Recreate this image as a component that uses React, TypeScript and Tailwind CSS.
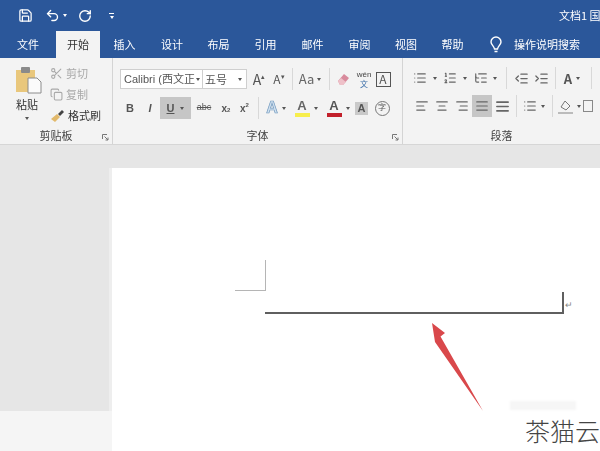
import React from "react";
import {
  AlignCenter,
  AlignJustify,
  AlignLeft,
  AlignRight,
  Copy,
  IndentDecrease,
  IndentIncrease,
  List,
  ListOrdered,
  ListTree,
  Save,
  Scissors,
  Undo2,
  RotateCw,
} from "lucide-react";

const TABS = [
  { label: "文件", w: "w-[56px]" },
  { label: "开始", w: "w-[44px]", active: true },
  { label: "插入", w: "w-[49px]" },
  { label: "设计", w: "w-[46px]" },
  { label: "布局", w: "w-[47px]" },
  { label: "引用", w: "w-[47px]" },
  { label: "邮件", w: "w-[47px]" },
  { label: "审阅", w: "w-[47px]" },
  { label: "视图", w: "w-[46px]" },
  { label: "帮助", w: "w-[47px]" },
];

function Caret({ className = "" }: { className?: string }) {
  return <span className={`block w-0 h-0 border-x-[2.5px] border-x-transparent border-t-[3px] border-t-[#555] ${className}`} />;
}

function Sep() {
  return <span className="block w-px h-[22px] bg-[#d8d8d8]" />;
}

function Cell({ w, children, className = "" }: { w: string; children?: React.ReactNode; className?: string }) {
  return <div className={`flex items-center justify-center shrink-0 h-[22px] ${w} ${className}`}>{children}</div>;
}

function GroupLabel({ children }: { children: React.ReactNode }) {
  return <div className="absolute bottom-[2px] inset-x-0 text-center text-[11px] leading-[14px] text-[#444]">{children}</div>;
}

function Launcher() {
  return (
    <svg className="absolute right-[3px] bottom-[3px]" width="7" height="7" viewBox="0 0 7 7" fill="none" stroke="#777">
      <path d="M0.5 5V0.5H5M2.5 2.5L6 6M6 3.5V6H3.5" />
    </svg>
  );
}

function PasteIcon() {
  return (
    <svg width="26" height="27" viewBox="0 0 26 27">
      <rect x="0" y="3" width="19" height="22" fill="#e9c77c" />
      <rect x="5" y="0" width="9" height="6" rx="1" fill="#8a8a8a" />
      <path d="M12 11h9l4 4v11H12z" fill="#fbfbfb" stroke="#8c8c8c" />
    </svg>
  );
}

function BrushIcon() {
  return (
    <svg width="15" height="14" viewBox="0 0 15 14">
      <path d="M1 10l6-5 3 3-5 5z" fill="#e2b96b" />
      <path d="M8 5l4-4 2 2-4 4z" fill="#444" />
    </svg>
  );
}

function ColorA({ bar, fill = "#555" }: { bar: string; fill?: string }) {
  return (
    <span className="flex flex-col items-center leading-none">
      <span className="text-[13px] leading-[13px] font-bold" style={{ color: fill }}>A</span>
      <span className="block w-[15px] h-[4px] mt-px" style={{ background: bar }} />
    </span>
  );
}

export default function App() {
  return (
    <div className="relative w-[600px] h-[451px] overflow-hidden bg-[#e6e6e6] font-['Noto_Sans_CJK_SC','Liberation_Sans',sans-serif]">
      <div className="blur-[0.4px]">
        {/* Title bar */}
        <div className="h-[31px] bg-[#2b579a] flex items-center text-white">
          <Save size={15} strokeWidth={2} className="ml-[18px]" />
          <Undo2 size={15} strokeWidth={2.2} className="ml-[12px]" />
          <Caret className="ml-[3px] !border-t-white" />
          <RotateCw size={14} strokeWidth={2.4} className="ml-[11px]" />
          <span className="ml-[17px] flex flex-col items-center gap-[2px]">
            <span className="block w-[5px] h-px bg-white" />
            <Caret className="!border-t-white" />
          </span>
          <span className="ml-auto text-[11px] whitespace-nowrap w-[41px] overflow-hidden">文档1 国</span>
        </div>

        {/* Tabs */}
        <div className="h-[27px] bg-[#2b579a] flex items-stretch text-[11px] text-white">
          {TABS.map((t) => (
            <div
              key={t.label}
              className={`${t.w} shrink-0 flex items-center justify-center ${t.active ? "bg-[#f3f3f3] text-[#333]" : ""}`}
            >
              {t.label}
            </div>
          ))}
          <div className="flex items-center ml-[14px] gap-[12px]">
            <svg width="12" height="17" viewBox="0 0 12 17" fill="none" stroke="white" strokeWidth="1.4">
              <path d="M6 1a5 5 0 0 1 5 5c0 2.500-3 4-3.500 7h-3C4 10 1 8.500 1 6a5 5 0 0 1 5-5zM4.500 15.500h3" />
            </svg>
            <span className="whitespace-nowrap">操作说明搜索</span>
          </div>
        </div>

        {/* Ribbon */}
        <div className="h-[87px] bg-[#f3f3f3] border-b border-[#d6d6d6] flex text-[#444]">
          <section className="relative w-[113px] shrink-0 border-r border-[#d4d4d4] flex">
            <div className="w-[50px] pl-[16px] pt-[9px] flex flex-col items-start">
              <PasteIcon />
              <span className="text-[11px] leading-[14px] mt-[3px] text-[#333]">粘贴</span>
              <Caret className="ml-[9px] mt-[6px]" />
            </div>
            <div className="pt-[5px] text-[11px] leading-[21px] flex flex-col">
              <div className="flex items-center gap-[3px] text-[#a9a9a9]"><Scissors size={13} /> 剪切</div>
              <div className="flex items-center gap-[3px] text-[#a9a9a9]"><Copy size={13} /> 复制</div>
              <div className="flex items-center gap-[3px] text-[#333]"><BrushIcon /> 格式刷</div>
            </div>
            <GroupLabel>剪贴板</GroupLabel>
            <Launcher />
          </section>

          <section className="relative w-[290px] shrink-0 border-r border-[#d4d4d4] pl-[7px] pt-[10px]">
            <div className="flex items-center text-[11px]">
              <div className="w-[83px] h-[20px] shrink-0 bg-white border border-[#cfcfcf] flex items-center justify-between pl-[3px] pr-[2px] font-['Liberation_Sans','Noto_Sans_CJK_SC',sans-serif] whitespace-nowrap overflow-hidden text-[#555]">
                Calibri (西文正 <Caret className="shrink-0" />
              </div>
              <div className="w-[44px] h-[20px] shrink-0 bg-white border border-l-0 border-[#cfcfcf] flex items-center justify-between pl-[2px] pr-[4px] text-[#555]">
                五号 <Caret />
              </div>
              <Cell w="w-[22px]" className="ml-[1px] text-[14px] text-[#555]">A<sup className="text-[7px]">▴</sup></Cell>
              <Cell w="w-[18px]" className="text-[12px] text-[#555]">A<sup className="text-[7px]">▾</sup></Cell>
              <Cell w="w-[8px]"><Sep /></Cell>
              <Cell w="w-[28px]" className="text-[13px] gap-[3px] text-[#666]">Aa<Caret /></Cell>
              <Cell w="w-[10px]"><Sep /></Cell>
              <Cell w="w-[20px]">
                <svg width="14" height="14" viewBox="0 0 14 14"><path d="M1 9l6-7 5 4-6 7H3z" fill="#d88a9c" /><path d="M1 9l3-3 5 4-3 3H3z" fill="#eec0c8" /></svg>
              </Cell>
              <Cell w="w-[20px]">
                <span className="flex flex-col items-center text-[8px] leading-[9px]"><span className="font-['Liberation_Sans',sans-serif]">wén</span><span className="text-[#3b6ea8]">文</span></span>
              </Cell>
              <Cell w="w-[18px]">
                <span className="w-[15px] h-[15px] border border-[#555] flex items-center justify-center text-[12px] leading-none text-[#555]">A</span>
              </Cell>
            </div>
            <div className="flex items-center mt-[7px] text-[#555] font-['Liberation_Sans','Noto_Sans_CJK_SC',sans-serif]">
              <Cell w="w-[20px]" className="font-bold text-[11px]">B</Cell>
              <Cell w="w-[20px]" className="italic font-bold text-[11px]">I</Cell>
              <Cell w="w-[31px]" className="bg-[#c6c6c6] gap-[6px] text-[11px] font-bold">
                <span className="underline">U</span><Caret />
              </Cell>
              <Cell w="w-[26px]" className="text-[9px] line-through">abc</Cell>
              <Cell w="w-[18px]" className="font-bold text-[10px]">x<sub className="text-[6px]">2</sub></Cell>
              <Cell w="w-[19px]" className="font-bold text-[10px]">x<sup className="text-[6px]">2</sup></Cell>
              <Cell w="w-[8px]"><Sep /></Cell>
              <Cell w="w-[28px]" className="gap-[4px]">
                <span className="text-[16px] leading-none font-bold text-[#cfe0ef] [-webkit-text-stroke:0.7px_#6f97bd]">A</span><Caret />
              </Cell>
              <Cell w="w-[32px]" className="gap-[4px]"><ColorA bar="#f7ee4c" fill="#666" /><Caret /></Cell>
              <Cell w="w-[32px]" className="gap-[4px]"><ColorA bar="#c2202b" /><Caret /></Cell>
              <Cell w="w-[15px]">
                <span className="w-[13px] h-[13px] bg-[#c9c9c9] flex items-center justify-center text-[11px] font-bold leading-none">A</span>
              </Cell>
              <Cell w="w-[26px]">
                <span className="w-[15px] h-[15px] rounded-full border border-[#777] flex items-center justify-center text-[8px] leading-none">字</span>
              </Cell>
            </div>
            <GroupLabel>字体</GroupLabel>
            <Launcher />
          </section>

          <section className="relative flex-1 pl-[9px] pt-[10px] overflow-hidden">
            <div className="flex items-center h-[20px] text-[#666]">
              <Cell w="w-[16px]"><List size={14} /></Cell>
              <Cell w="w-[14px]"><Caret /></Cell>
              <Cell w="w-[16px]"><ListOrdered size={14} /></Cell>
              <Cell w="w-[14px]"><Caret /></Cell>
              <Cell w="w-[17px]"><ListTree size={14} /></Cell>
              <Cell w="w-[12px]"><Caret /></Cell>
              <Cell w="w-[10px]"><Sep /></Cell>
              <Cell w="w-[20px]"><IndentDecrease size={15} /></Cell>
              <Cell w="w-[20px]"><IndentIncrease size={15} /></Cell>
              <Cell w="w-[8px]"><Sep /></Cell>
              <Cell w="w-[26px]" className="gap-[4px]">
                <span className="text-[13px] font-bold leading-none text-[#555]">A</span><Caret />
              </Cell>
              <Cell w="w-[12px]"><Sep /></Cell>
            </div>
            <div className="flex items-center mt-[7px] text-[#666]">
              <Cell w="w-[20px]"><AlignLeft size={14} /></Cell>
              <Cell w="w-[20px]"><AlignCenter size={14} /></Cell>
              <Cell w="w-[20px]"><AlignRight size={14} /></Cell>
              <Cell w="w-[20px]" className="bg-[#c6c6c6]"><AlignJustify size={14} /></Cell>
              <Cell w="w-[20px]"><AlignJustify size={15} strokeWidth={2.6} /></Cell>
              <Cell w="w-[8px]"><Sep /></Cell>
              <Cell w="w-[28px]" className="gap-[4px]"><List size={14} /><Caret /></Cell>
              <Cell w="w-[8px]"><Sep /></Cell>
              <Cell w="w-[27px]" className="gap-[4px]">
                <svg width="15" height="15" viewBox="0 0 15 15"><path d="M3 8l4-6 5 5-4 4z" fill="none" stroke="#777" /><rect x="0" y="13" width="15" height="2" fill="#bbb" /></svg>
                <Caret />
              </Cell>
              <Cell w="w-[10px]"><span className="block w-[10px] h-[12px] border border-[#888]" /></Cell>
            </div>
            <GroupLabel>段落</GroupLabel>
          </section>
        </div>
      </div>

      {/* Document area */}
      <div className="pt-[23px] flex h-[306px]">
        <div className="w-[112px] shrink-0 flex flex-col">
          <div className="h-[243px] border-r-[3px] border-[#eeeeee]" />
          <div className="flex-1 bg-[#f5f5f5]" />
        </div>
        <div className="flex-1 bg-white">
          <div className="ml-[123px] mt-[92px] w-[31px] h-[31px] border-r border-b border-[#b5b5b5]" />
          <div className="flex items-start ml-[153px] mt-[1px]">
            <div className="w-[297px] h-[20px] border-b-2 border-r-2 border-[#5f5f5f] box-content" />
            <span className="ml-[1px] mt-[8px] text-[9px] leading-[10px] text-[#888]">↵</span>
          </div>
        </div>
      </div>

      {/* Red annotation arrow */}
      <svg className="absolute left-[425px] top-[318px]" width="65" height="100" viewBox="0 0 65 100">
        <path d="M7 5L20 15L15.500 18.500L58 93L10 24z" fill="#d9484b" />
      </svg>

      {/* Watermark */}
      <div className="absolute left-[510px] top-[401px] w-[66px] h-[9px] bg-[#f6f6f6] blur-[1px]" />
      <div className="absolute right-0 top-[415px] text-[25px] leading-[30px] font-light text-[#444] whitespace-nowrap">茶猫云</div>
    </div>
  );
}
